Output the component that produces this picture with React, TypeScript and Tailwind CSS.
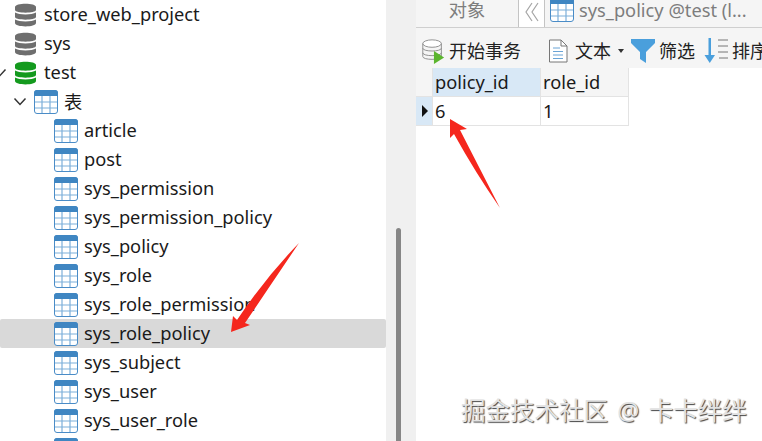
const font = "[font-family:'Noto_Sans','Noto_Sans_CJK_SC',sans-serif]";

function DbIcon({ color }: { color: string }) {
  return (
    <svg width="21" height="24" viewBox="0 0 21 24" className="shrink-0">
      <path d="M0 4C0 -0.5 21 -0.5 21 4V7C21 10.5 0 10.5 0 7Z" fill={color} />
      <path d="M0 9.5C4 12 17 12 21 9.5V14C21 17.5 0 17.5 0 14Z" fill={color} />
      <path d="M0 16.5C4 19 17 19 21 16.5V20C21 24.5 0 24.5 0 20Z" fill={color} />
    </svg>
  );
}

function TableIcon({ size = 24 }: { size?: number }) {
  return (
    <svg width={size} height={size} viewBox="0 0 24 24" className="shrink-0">
      <rect x="0.5" y="0.5" width="23" height="23" rx="2.5" fill="#fff" stroke="#4a8cc7" />
      <path d="M0 3A3 3 0 0 1 3 0H21A3 3 0 0 1 24 3V6H0Z" fill="#3f86c2" />
      <path d="M1 12H23M1 18H23M8 6V23M16 6V23" stroke="#7db0da" strokeWidth="1.2" fill="none" />
    </svg>
  );
}

function Chevron() {
  return (
    <svg width="14" height="10" viewBox="0 0 14 10" className="shrink-0">
      <path d="M1.5 1.5L7 7.5L12.5 1.5" stroke="#333" strokeWidth="1.5" fill="none" />
    </svg>
  );
}

const tables = [
  "article",
  "post",
  "sys_permission",
  "sys_permission_policy",
  "sys_policy",
  "sys_role",
  "sys_role_permission",
  "sys_role_policy",
  "sys_subject",
  "sys_user",
  "sys_user_role",
  "",
];

function Sidebar() {
  return (
    <div className="w-[386px] h-full shrink-0 overflow-hidden bg-white text-[18.25px] text-[#1a1a1a]">
      <div className="h-[29px] flex items-center pl-[15px] gap-[8px]">
        <DbIcon color="#6e6e6e" />
        <span className="-mt-[2px]">store_web_project</span>
      </div>
      <div className="h-[29px] flex items-center pl-[15px] gap-[8px]">
        <DbIcon color="#6e6e6e" />
        <span className="-mt-[2px]">sys</span>
      </div>
      <div className="h-[29px] flex items-center">
        <div className="w-[15px] h-full flex items-center overflow-hidden shrink-0">
          <div className="-ml-[7px]">
            <Chevron />
          </div>
        </div>
        <DbIcon color="#149a1e" />
        <span className="ml-[8px] -mt-[2px]">test</span>
      </div>
      <div className="h-[29px] flex items-center pl-[13px] gap-[7px]">
        <Chevron />
        <TableIcon />
        <span className="ml-[-1px]">表</span>
      </div>
      {tables.map((name, i) => (
        <div
          key={i}
          className={
            "h-[29px] flex items-center pl-[54px] gap-[6px] rounded-[2px] " +
            (name === "sys_role_policy" ? "bg-[#d9d9d9]" : "")
          }
        >
          <TableIcon />
          <span className="-mt-[2px]">{name}</span>
        </div>
      ))}
    </div>
  );
}

function Scrollbar() {
  return (
    <div className="w-[30px] h-full shrink-0 bg-[#f0f0f0] pl-[10px] pt-[228px]">
      <div className="w-[5px] h-full bg-[#868686] rounded-t-[3px]" />
    </div>
  );
}

function Tabs() {
  return (
    <div className="h-[28px] flex border-b border-[#cfcfcf] bg-[#f5f5f5] text-[18.25px] leading-[20px] text-[#7d7d7d]">
      <div className="w-[103px] border-r border-[#c4c4c4] flex items-center justify-center pb-[7px]">
        对象
      </div>
      <div className="w-[26px] border-r border-[#c4c4c4] bg-white flex items-center justify-center pb-[4px]">
        <svg width="14" height="22" viewBox="0 0 14 22">
          <path d="M7 2L1 11L7 20M13 2L7 11L13 20" stroke="#a5a5a5" strokeWidth="1.2" fill="none" />
        </svg>
      </div>
      <div className="flex items-center gap-[5px] pl-[5px] pb-[7px]">
        <TableIcon />
        <span className="whitespace-nowrap">sys_policy @test (l...</span>
      </div>
    </div>
  );
}

function Toolbar() {
  return (
    <div className="h-[40px] flex items-center pt-[6px] bg-[#f5f5f5] text-[18px] text-[#222] overflow-hidden whitespace-nowrap">
      <svg width="24" height="26" viewBox="0 0 24 28" className="ml-[5px] shrink-0">
        <ellipse cx="11" cy="6" rx="10" ry="4" fill="#fff" stroke="#8a8a8a" />
        <path d="M1 6V20C1 24 21 24 21 20V6M1 11C1 15 21 15 21 11M1 16C1 20 21 20 21 16" fill="none" stroke="#8a8a8a" />
        <path d="M13 14L24 21L13 28Z" fill="#5bb52e" />
      </svg>
      <span className="ml-[4px]">开始事务</span>
      <div className="w-px h-[30px] bg-[#dcdcdc] ml-[13px]" />
      <svg width="20" height="24" viewBox="0 0 20 24" className="ml-[14px] shrink-0">
        <path d="M1.5 1H13L19 7V23H1.5Z" fill="#fff" stroke="#777" />
        <path d="M13 1V7H19" fill="none" stroke="#777" />
        <path d="M5 9H12M5 12.5H15M5 16H15M5 19.5H15" stroke="#6aa4d6" />
      </svg>
      <span className="ml-[7px]">文本</span>
      <svg width="6" height="4" viewBox="0 0 6 4" className="ml-[7px] shrink-0">
        <path d="M0 0H6L3 4Z" fill="#333" />
      </svg>
      <svg width="24" height="24" viewBox="0 0 24 24" className="ml-[7px] shrink-0">
        <path d="M0 0H24V4L15 13V24L9 20V13L0 4Z" fill="#4a9fdc" />
      </svg>
      <span className="ml-[4px]">筛选</span>
      <svg width="24" height="26" viewBox="0 0 24 26" className="ml-[9px] shrink-0">
        <path d="M4.5 0H7V17H11L5.75 25L0.5 17H4.5Z" fill="#4a9fdc" />
        <path d="M14 2H24M14 8H24M14 14H24M15 20H24" stroke="#777" />
      </svg>
      <span className="ml-[4px]">排序</span>
    </div>
  );
}

function DataTable() {
  return (
    <div className="text-[18.25px] text-[#1a1a1a]">
      <div className="flex h-[29px]">
        <div className="w-[17px] bg-[#f5f5f5] border-b border-r border-[#e3e3e3]" />
        <div className="w-[108px] bg-[#d8e8f6] border-b border-r border-[#e3e3e3] pl-[2px] leading-[27px]">
          policy_id
        </div>
        <div className="w-[88px] bg-[#f5f5f5] border-b border-r border-[#e3e3e3] pl-[2px] leading-[27px]">
          role_id
        </div>
      </div>
      <div className="flex h-[29px]">
        <div className="w-[17px] bg-[#d8e8f6] border-b border-r border-[#e3e3e3] flex items-center justify-end pr-[4px]">
          <svg width="6" height="12" viewBox="0 0 6 12">
            <path d="M0 0L6 6L0 12Z" fill="#111" />
          </svg>
        </div>
        <div className="w-[108px] bg-white border-b border-r border-[#e3e3e3] pl-[2px] leading-[27px]">6</div>
        <div className="w-[88px] bg-white border-b border-r border-[#e3e3e3] pl-[2px] leading-[27px]">1</div>
      </div>
    </div>
  );
}

function Arrows() {
  return (
    <svg width="762" height="441" viewBox="0 0 762 441" className="absolute inset-0 pointer-events-none">
      <path d="M299 243Q272 283 245 323L250 325L231 332L233 316L237 320Q265 278 299 243Z" fill="#f5271d" />
      <path d="M450 119L467 129L460 130L500 208Q475 172 454 134L450 138Z" fill="#f5271d" />
    </svg>
  );
}

export default function App() {
  return (
    <div className={"relative w-[762px] h-[441px] overflow-hidden flex bg-white " + font}>
      <Sidebar />
      <Scrollbar />
      <div className="flex-1 min-w-0">
        <Tabs />
        <Toolbar />
        <DataTable />
      </div>
      <Arrows />
      <div className="absolute left-[461px] top-[396px] text-[24.5px] leading-[30px] whitespace-nowrap text-[#e2e2e2] [word-spacing:3px] [text-shadow:1px_1px_1px_#444]">
        掘金技术社区 @ 卡卡绊绊
      </div>
    </div>
  );
}
